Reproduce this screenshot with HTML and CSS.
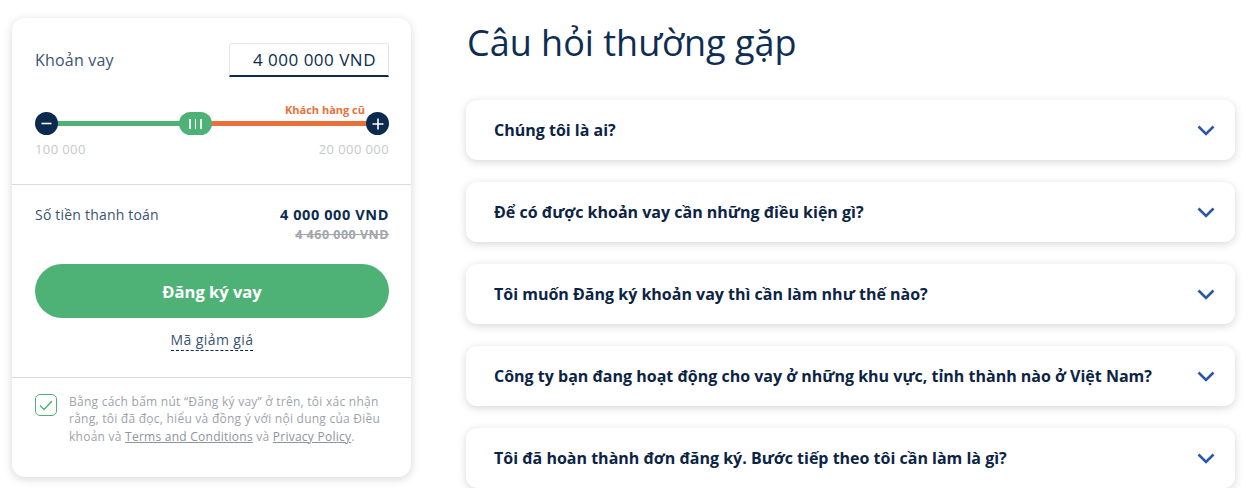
FILE: index.html
```html
<!DOCTYPE html>
<html lang="vi">
<head>
<meta charset="utf-8">
<title>Khoản vay</title>
<link rel="stylesheet" href="styles.css">
</head>
<body>
<div class="page">
  <aside class="card">
    <section class="sec sec-loan">
      <div class="loan-row">
        <span class="label">Khoản vay</span>
        <div class="amount-input">4 000 000 VND</div>
      </div>
      <div class="slider">
        <span class="circle-btn">
          <svg width="11" height="11" viewBox="0 0 11 11"><path d="M0.5 5.5h10" stroke="#fff" stroke-width="1.6"/></svg>
        </span>
        <span class="track"></span>
        <span class="circle-btn">
          <svg width="12" height="12" viewBox="0 0 12 12"><path d="M0.5 6h11M6 0.5v11" stroke="#fff" stroke-width="1.6"/></svg>
        </span>
        <span class="old-tag">Khách hàng cũ</span>
        <span class="handle"><i></i><i></i><i></i></span>
      </div>
      <div class="range-labels">
        <span>100 000</span>
        <span>20 000 000</span>
      </div>
    </section>
    <section class="sec sec-pay">
      <div class="pay-row">
        <span class="pay-label">Số tiền thanh toán</span>
        <div class="pay-values">
          <span class="pay-now">4 000 000 VND</span>
          <span class="pay-old">4 460 000 VND</span>
        </div>
      </div>
      <button class="submit">Đăng ký vay</button>
      <div class="promo"><span>Mã giảm giá</span></div>
    </section>
    <section class="sec sec-terms">
      <span class="checkbox">
        <svg width="14" height="11" viewBox="0 0 14 11"><path d="M1 5.5l4 4L13 1" fill="none" stroke="#4eb277" stroke-width="1.5"/></svg>
      </span>
      <p class="terms">Bằng cách bấm nút “Đăng ký vay” ở trên, tôi xác nhận<br>rằng, tôi đã đọc, hiểu và đồng ý với nội dung của Điều<br>khoản và <a>Terms and Conditions</a> và <a>Privacy Policy</a>.</p>
    </section>
  </aside>
  <main class="faq">
    <h1 class="faq-title">Câu hỏi thường gặp</h1>
    <div class="faq-list">
      <div class="faq-item"><span>Chúng tôi là ai?</span><svg class="chev" width="18" height="11" viewBox="0 0 18 11"><path d="M1.5 1.5l7.5 7.5 7.5-7.5" fill="none" stroke="#2b58a6" stroke-width="2.6"/></svg></div>
      <div class="faq-item"><span>Để có được khoản vay cần những điều kiện gì?</span><svg class="chev" width="18" height="11" viewBox="0 0 18 11"><path d="M1.5 1.5l7.5 7.5 7.5-7.5" fill="none" stroke="#2b58a6" stroke-width="2.6"/></svg></div>
      <div class="faq-item"><span>Tôi muốn Đăng ký khoản vay thì cần làm như thế nào?</span><svg class="chev" width="18" height="11" viewBox="0 0 18 11"><path d="M1.5 1.5l7.5 7.5 7.5-7.5" fill="none" stroke="#2b58a6" stroke-width="2.6"/></svg></div>
      <div class="faq-item"><span>Công ty bạn đang hoạt động cho vay ở những khu vực, tỉnh thành nào ở Việt Nam?</span><svg class="chev" width="18" height="11" viewBox="0 0 18 11"><path d="M1.5 1.5l7.5 7.5 7.5-7.5" fill="none" stroke="#2b58a6" stroke-width="2.6"/></svg></div>
      <div class="faq-item"><span>Tôi đã hoàn thành đơn đăng ký. Bước tiếp theo tôi cần làm là gì?</span><svg class="chev" width="18" height="11" viewBox="0 0 18 11"><path d="M1.5 1.5l7.5 7.5 7.5-7.5" fill="none" stroke="#2b58a6" stroke-width="2.6"/></svg></div>
    </div>
  </main>
</div>
</body>
</html>
```
FILE: styles.css
```css
* { box-sizing: border-box; }
html, body { margin: 0; background: #fff; }
body { font-family: "Open Sans", Lato, sans-serif; color: #0d2a4c; overflow: hidden; }

.page {
  display: flex;
  align-items: flex-start;
  gap: 55px;
  padding: 18px 16px 0 12px;
}

.card {
  width: 399px;
  flex: none;
  background: #fff;
  border-radius: 13px;
  box-shadow: 0 2px 10px rgba(0, 0, 0, 0.16);
}
.sec { padding: 0 22px 0 23px; }
.sec + .sec { border-top: 1px solid #d6dce2; }

.sec-loan { padding-top: 25px; padding-bottom: 27px; }
.loan-row { display: flex; justify-content: space-between; align-items: center; }
.label { font-size: 16px; letter-spacing: 0.2px; color: #3a5373; }
.amount-input {
  width: 160px; height: 34px;
  border: 1px solid #e3e6ea;
  border-bottom: 2px solid #0c2b4f;
  border-radius: 3px 3px 0 0;
  font-size: 17px; letter-spacing: 0.5px; color: #0c2b4f;
  text-align: right; padding: 4px 12px 0 0;
}

.slider {
  position: relative;
  margin-top: 35px;
  height: 23px;
  display: flex; align-items: center;
}
.circle-btn {
  width: 23px; height: 23px; border-radius: 50%;
  background: #0b2a4e; flex: none; position: relative; z-index: 1;
  display: flex; align-items: center; justify-content: center;
}
.track {
  flex: 1; height: 5px; margin: 0 -2px;
  background: linear-gradient(to right, #4eb277 0 139px, #ea7039 139px 100%);
}
.old-tag {
  position: absolute; right: 24px; top: -10px;
  font-size: 11px; font-weight: 700; color: #ea7039;
}
.handle {
  position: absolute; left: 144px; top: 0;
  width: 33px; height: 23px; border-radius: 12px;
  background: #4eb277;
  display: flex; align-items: center; justify-content: center; gap: 4px;
}
.handle i { width: 1.5px; height: 10px; background: #eef8f2; }

.range-labels {
  display: flex; justify-content: space-between;
  margin-top: 6px; font-size: 13px; letter-spacing: 0.4px; line-height: 16px; color: #c6c9cc;
}

.sec-pay { padding-top: 20px; padding-bottom: 27px; }
.pay-row { display: flex; justify-content: space-between; align-items: flex-start; }
.pay-label { font-size: 14px; letter-spacing: 0.2px; line-height: 20px; color: #3a5373; }
.pay-values { display: flex; flex-direction: column; align-items: flex-end; }
.pay-now { font-size: 14.5px; letter-spacing: 0.6px; line-height: 20px; font-weight: 700; color: #0c2b4f; }
.pay-old { font-size: 12.5px; letter-spacing: 0.5px; line-height: 20px; font-weight: 700; color: #a2a6ab; text-decoration: line-through; }

.submit {
  display: block; width: 100%; height: 54px; margin-top: 19px;
  border: 0; border-radius: 27px; background: #4eb277;
  color: #fff; font-family: inherit; font-size: 16.5px; font-weight: 700;
}
.promo { text-align: center; margin-top: 11px; line-height: 20px; }
.promo span {
  font-size: 14px; letter-spacing: 0.4px; color: #3a5373; padding-bottom: 1px;
  border-bottom: 1px dashed #0c2b4f;
}

.sec-terms { display: flex; gap: 12px; padding-top: 15px; padding-bottom: 32px; }
.checkbox {
  width: 22px; height: 22px; flex: none; margin-top: 1px;
  border: 1.5px solid #4eb277; border-radius: 5px;
  display: flex; align-items: center; justify-content: center;
}
.terms { margin: 0; font-size: 12px; letter-spacing: 0.25px; line-height: 17.3px; color: #9da3ab; }
.terms a { text-decoration: underline; color: #8e949c; }

.faq { flex: 1; }
.faq-title {
  margin: 0 0 0 1px;
  font-size: 36px; line-height: 50px; font-weight: 400; color: #0e2d53;
}
.faq-list { display: flex; flex-direction: column; gap: 22px; margin-top: 32px; }
.faq-item {
  height: 60px; border-radius: 11px; background: #fff;
  box-shadow: 0 2px 8px rgba(0, 0, 0, 0.16);
  display: flex; align-items: center; justify-content: space-between;
  padding: 0 20px 0 28px;
}
.faq-item span { font-size: 16px; font-weight: 700; color: #0c2444; }
.chev { flex: none; }
```
